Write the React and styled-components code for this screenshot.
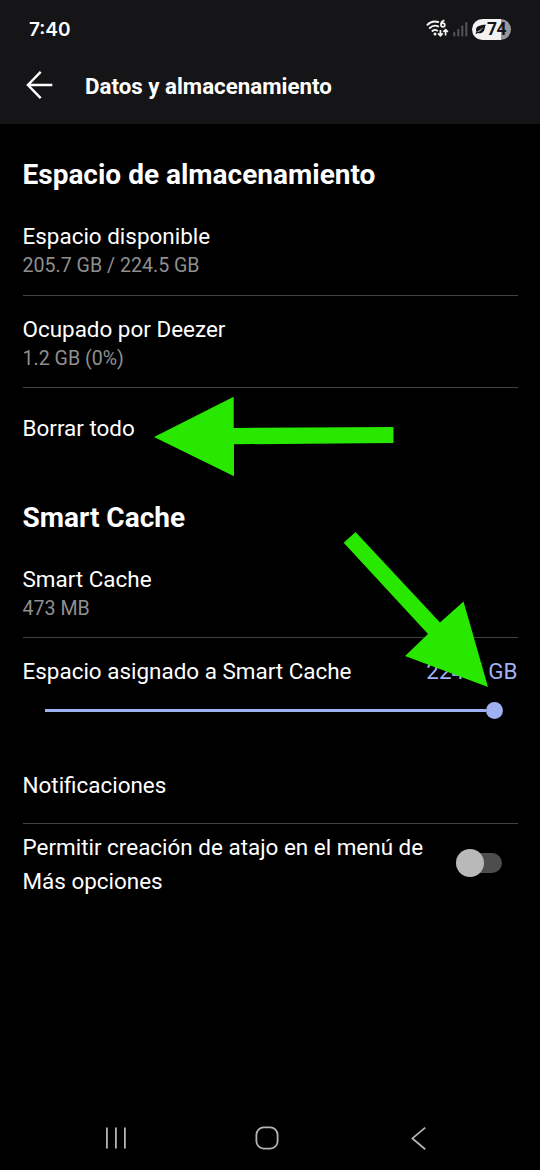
import React, { useState } from "react";
import styled, { createGlobalStyle } from "styled-components";

const App = () => {
  const [shortcut, setShortcut] = useState(false);

  return (
    <Screen>
      <GlobalStyle />
      <TopArea>
        <StatusBar>
          <Clock>7:40</Clock>
          <StatusIcons>
            <WifiIcon />
            <SignalIcon />
            <Battery>
              <LeafIcon />
              <span>74</span>
            </Battery>
          </StatusIcons>
        </StatusBar>
        <Header>
          <BackButton aria-label="Atrás">
            <BackIcon />
          </BackButton>
          <Title>Datos y almacenamiento</Title>
        </Header>
      </TopArea>

      <Content>
        <Heading $height={79}>Espacio de almacenamiento</Heading>
        <Row $height={92}>
          <Label>Espacio disponible</Label>
          <Value>205.7 GB / 224.5 GB</Value>
        </Row>
        <Row $height={92} $divider>
          <Label>Ocupado por Deezer</Label>
          <Value>1.2 GB (0%)</Value>
        </Row>
        <Row $height={80} $divider $top={23}>
          <Label>Borrar todo</Label>
        </Row>

        <Heading $height={79}>Smart Cache</Heading>
        <Row $height={91}>
          <Label>Smart Cache</Label>
          <Value>473 MB</Value>
        </Row>
        <Row $height={112} $divider>
          <Assigned>
            <Label>Espacio asignado a Smart Cache</Label>
            <Size>224.5 GB</Size>
          </Assigned>
          <Slider>
            <Track />
            <Thumb />
          </Slider>
        </Row>

        <Row $height={74} $top={19}>
          <Label>Notificaciones</Label>
        </Row>
        <SwitchRow>
          <Label>Permitir creación de atajo en el menú de Más opciones</Label>
          <Switch
            aria-label="Permitir creación de atajo"
            onClick={() => {
              setShortcut(!shortcut);
            }}
          >
            <Knob $on={shortcut} />
          </Switch>
        </SwitchRow>
      </Content>

      <NavBar>
        <RecentIcon />
        <HomeIcon />
        <NavBackIcon />
      </NavBar>

      <Arrows viewBox="0 0 540 1170">
        <path d="M154 437 L233.7 396.7 V428 L393.5 427 V443 L234 444.3 V476.3 Z" />
        <path d="M355.5 532 L440 622.5 L463.5 601.5 L488 687 L405 656 L428 634 L343.7 542.7 Z" />
      </Arrows>
    </Screen>
  );
};

export default App;

const WifiIcon = () => (
  <svg width="24" height="20" viewBox="0 0 24 20" fill="none" stroke="#f4f4f4">
    <g strokeWidth="1.9" strokeLinecap="round">
      <path d="M1.4 5.8 C4.2 2.8 8.4 1.9 12.2 3" />
      <path d="M3.8 9 C6 6.8 9.4 6.2 12.2 7.3" />
      <path d="M6.4 12 C7.8 10.8 9.6 10.6 11.2 11.5" />
    </g>
    <circle cx="9" cy="14.9" r="1.5" fill="#f4f4f4" stroke="none" />
    <path d="M18.4 1.4 C16 2 15 3.8 15 5.6" strokeWidth="1.7" />
    <circle cx="16.9" cy="6" r="1.9" strokeWidth="1.7" />
    <path d="M14.4 11 V16.6 M12.1 14.4 L14.4 16.7 L16.7 14.4" strokeWidth="1.7" />
    <path d="M19.6 16.6 V10.8 M17.3 12.9 L19.6 10.6 L21.9 12.9" strokeWidth="1.7" />
  </svg>
);

const SignalIcon = () => (
  <svg width="15" height="16" viewBox="0 0 15 16" fill="#55555a">
    <rect x="0.3" y="11" width="2" height="4.5" rx="0.8" />
    <rect x="4.3" y="8" width="2" height="7.5" rx="0.8" />
    <rect x="8.3" y="4.5" width="2" height="11" rx="0.8" />
    <rect x="12.3" y="1" width="2" height="14.5" rx="0.8" />
  </svg>
);

const LeafIcon = () => (
  <svg width="11" height="11" viewBox="0 0 11 11">
    <path
      d="M10.8 0.8 C5.4 1 1.2 2 1 5.6 C0.9 6.6 1.2 7.2 1.6 7.7 L0.4 9.3 L1.4 9.9 L2.6 8.9 C4.4 9.8 7.4 9.2 8.8 7 C10 5 9.8 2.8 10.8 0.8 Z"
      fill="#151517"
    />
    <path
      d="M2.8 7.6 C4.6 7 6 6 7.2 4.4"
      fill="none"
      stroke="#f2f2f2"
      strokeWidth="0.9"
    />
  </svg>
);

const BackIcon = () => (
  <svg
    width="28"
    height="30"
    viewBox="0 0 28 30"
    fill="none"
    stroke="#fff"
    strokeWidth="2.4"
  >
    <path d="M15.7 1.8 L2.9 15 L15.7 28.2 M2.9 15 H27.3" />
  </svg>
);

const RecentIcon = () => (
  <svg width="22" height="22" viewBox="0 0 22 22" fill="#b4b4b4">
    <rect x="1" y="0.5" width="1.8" height="21" />
    <rect x="10" y="0.5" width="1.8" height="21" />
    <rect x="19" y="0.5" width="1.8" height="21" />
  </svg>
);

const HomeIcon = () => (
  <svg width="24" height="24" viewBox="0 0 24 24" fill="none">
    <rect
      x="1.4"
      y="1.4"
      width="21.2"
      height="21.2"
      rx="7.4"
      stroke="#b4b4b4"
      strokeWidth="1.8"
    />
  </svg>
);

const NavBackIcon = () => (
  <svg
    width="16"
    height="24"
    viewBox="0 0 16 24"
    fill="none"
    stroke="#b4b4b4"
    strokeWidth="1.8"
  >
    <path d="M14.2 1.6 L1.4 12.4 L14.2 23.2" />
  </svg>
);

const GlobalStyle = createGlobalStyle`
  * {
    box-sizing: border-box;
  }
  body {
    margin: 0;
    background-color: #000;
    font-family: Roboto, sans-serif;
  }
  svg {
    display: block;
    flex-shrink: 0;
  }
`;

const Screen = styled.div`
  position: relative;
  display: flex;
  flex-direction: column;
  width: 540px;
  height: 1170px;
  overflow: hidden;
  background-color: #000;
  color: #fff;
`;

const TopArea = styled.div`
  height: 124px;
  background-color: #151517;
`;

const StatusBar = styled.div`
  display: flex;
  align-items: center;
  justify-content: space-between;
  height: 58px;
  padding: 0 29px;
`;

const Clock = styled.div`
  font-family: Inter, sans-serif;
  font-size: 19px;
  font-weight: 600;
`;

const StatusIcons = styled.div`
  display: flex;
  align-items: center;
  gap: 3px;
`;

const Battery = styled.div`
  display: flex;
  align-items: center;
  gap: 1px;
  width: 39px;
  height: 21px;
  margin-left: 1px;
  padding-left: 3px;
  border-radius: 11px;
  background: linear-gradient(to right, #f2f2f2 74%, #98989a 74%);
  color: #151517;
  font-size: 17.5px;
  font-weight: 700;
  letter-spacing: -0.6px;
`;

const Header = styled.div`
  display: flex;
  align-items: center;
  height: 54px;
  padding-left: 25px;
`;

const BackButton = styled.button`
  width: 60px;
  padding: 0;
  border: none;
  background-color: transparent;
`;

const Title = styled.h1`
  margin: 0;
  padding-top: 2px;
  font-size: 22.3px;
  font-weight: 700;
`;

const Content = styled.main`
  flex: 1;
  padding: 0 22.5px;
`;

const Heading = styled.h2`
  height: ${({ $height }) => $height}px;
  margin: 0;
  padding-top: 33px;
  font-size: 28px;
  font-weight: 700;
  line-height: 35px;
`;

const Row = styled.div`
  height: ${({ $height }) => $height}px;
  padding-top: ${({ $top }) => $top ?? 16}px;
  border-top: ${({ $divider }) => ($divider ? "1px solid #424242" : "none")};
`;

const Label = styled.div`
  font-size: 22.45px;
  line-height: 34px;
`;

const Value = styled.div`
  margin-top: 1px;
  color: #8f8f8f;
  font-size: 19.6px;
  line-height: 24px;
`;

const Assigned = styled.div`
  display: flex;
  justify-content: space-between;
`;

const Size = styled(Label)`
  color: #a0b1f3;
`;

const Slider = styled.div`
  display: flex;
  align-items: center;
  height: 18px;
  margin: 13px 14.5px 0 22px;
`;

const Track = styled.div`
  flex: 1;
  height: 3px;
  background-color: #a0b1f3;
`;

const Thumb = styled.div`
  width: 17px;
  height: 17px;
  border-radius: 50%;
  background-color: #a0b1f3;
`;

const SwitchRow = styled.div`
  display: flex;
  align-items: center;
  justify-content: space-between;
  height: 80px;
  padding-right: 16px;
  border-top: 1px solid #424242;

  ${Label} {
    width: 410px;
  }
`;

const Switch = styled.button`
  display: flex;
  align-items: center;
  width: 44px;
  height: 20px;
  margin-bottom: 1px;
  padding: 0;
  border: none;
  border-radius: 10px;
  background-color: #4d4d4d;
`;

const Knob = styled.span`
  flex-shrink: 0;
  width: 28px;
  height: 28px;
  margin-left: ${({ $on }) => ($on ? 18 : -1.5)}px;
  border-radius: 50%;
  background-color: #b9b9b9;
`;

const NavBar = styled.nav`
  display: flex;
  align-items: center;
  justify-content: space-between;
  height: 64px;
  padding: 0 113px 0 105px;

  svg:nth-child(2) {
    margin-right: 4px;
  }
`;

/* hand-placed pointers drawn over the settings */
const Arrows = styled.svg`
  position: absolute;
  inset: 0;
  width: 540px;
  height: 1170px;
  fill: #28e800;
  pointer-events: none;
`;
